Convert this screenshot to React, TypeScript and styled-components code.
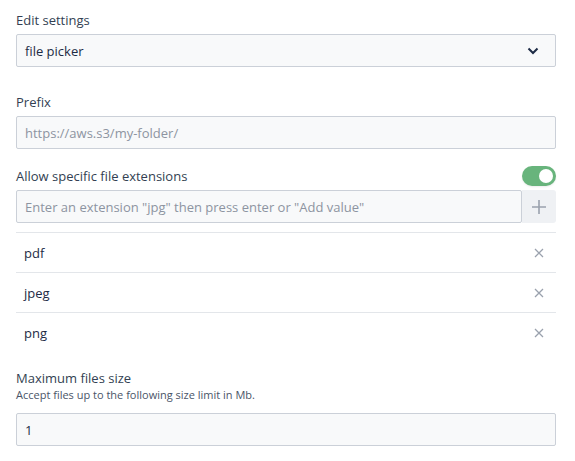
import React from 'react';
import styled, { createGlobalStyle } from 'styled-components';

const GlobalStyle = createGlobalStyle`
  body {
    margin: 0;
    background: #fff;
    font-family: "Open Sans", "Liberation Sans", sans-serif;
    color: #1d2b45;
  }
`;

const Page = styled.div`
  width: 540px;
  padding: 10px 19px 16px 16px;
  display: flex;
  flex-direction: column;
`;

const Field = styled.div<{ $gap?: number }>`
  display: flex;
  flex-direction: column;
  margin-bottom: ${(p) => p.$gap ?? 0}px;
`;

const LabelRow = styled.div<{ $height?: number; $space?: number }>`
  display: flex;
  align-items: center;
  justify-content: space-between;
  height: ${(p) => p.$height ?? 20}px;
  margin-bottom: ${(p) => p.$space ?? 4}px;
`;

const Label = styled.div`
  font-size: 13px;
  line-height: 18px;
  color: #333f52;
`;

const Help = styled.div`
  font-size: 11px;
  line-height: 15px;
  color: #4a5568;
  margin-bottom: 11px;
`;

const Box = styled.div<{ $muted?: boolean }>`
  height: 31px;
  flex-shrink: 0;
  box-sizing: content-box;
  border: 1px solid #cbd0d8;
  border-radius: 2px;
  background: #f8f9fa;
  display: flex;
  align-items: center;
  padding: 0 12px 0 8px;
  font-size: 13px;
  color: ${(p) => (p.$muted ? '#8d94a1' : '#1d2b45')};
`;

const GroupInput = styled(Box)`
  flex: 1;
`;

const Chevron = styled.svg`
  margin-left: auto;
  width: 12px;
  height: 8px;
  margin-right: 4px;
`;

const InputGroup = styled.div`
  display: flex;
  height: 33px;
`;

const AddButton = styled.div`
  width: 34px;
  background: #eff1f4;
  border-radius: 0 3px 3px 0;
  display: flex;
  align-items: center;
  justify-content: center;
`;

const List = styled.div`
  margin-top: 9px;
  display: flex;
  flex-direction: column;
`;

const Item = styled.div`
  height: 39px;
  border-top: 1px solid #e3e6ea;
  display: flex;
  align-items: center;
  padding: 0 12px 0 8px;
  font-size: 13px;
  color: #1d2b45;
`;

const Remove = styled.svg`
  margin-left: auto;
  width: 10px;
  height: 10px;
`;

const Toggle = styled.div<{ $on: boolean }>`
  width: 34px;
  height: 20px;
  border-radius: 10px;
  background: ${(p) => (p.$on ? '#68b47c' : '#cbd0d8')};
  display: flex;
  align-items: center;
  justify-content: ${(p) => (p.$on ? 'flex-end' : 'flex-start')};
  padding: 0 3px;
  box-sizing: border-box;
  box-shadow: 0 1px 2px rgba(0, 0, 0, 0.08);
`;

const Knob = styled.div`
  width: 14px;
  height: 14px;
  border-radius: 50%;
  background: #fff;
`;

const extensions = ['pdf', 'jpeg', 'png'];

export default function App() {
  return (
    <>
      <GlobalStyle />
      <Page>
        <Field $gap={25}>
          <LabelRow>
            <Label>Edit settings</Label>
          </LabelRow>
          <Box>
            file picker
            <Chevron viewBox="0 0 12 8">
              <path d="M1.5 1.5 L6 6 L10.5 1.5" fill="none" stroke="#1d2b45" strokeWidth="2" />
            </Chevron>
          </Box>
        </Field>

        <Field $gap={17}>
          <LabelRow>
            <Label>Prefix</Label>
          </LabelRow>
          <Box $muted>https://aws.s3/my-folder/</Box>
        </Field>

        <Field $gap={17}>
          <LabelRow>
            <Label>Allow specific file extensions</Label>
            <Toggle $on>
              <Knob />
            </Toggle>
          </LabelRow>
          <InputGroup>
            <GroupInput $muted>Enter an extension "jpg" then press enter or "Add value"</GroupInput>
            <AddButton>
              <svg width="16" height="16" viewBox="0 0 16 16">
                <path d="M8 1 V15 M1 8 H15" stroke="#9aa1ad" strokeWidth="1.6" />
              </svg>
            </AddButton>
          </InputGroup>
          <List>
            {extensions.map((ext) => (
              <Item key={ext}>
                {ext}
                <Remove viewBox="0 0 10 10">
                  <path d="M1 1 L9 9 M9 1 L1 9" stroke="#9aa1ad" strokeWidth="1.3" />
                </Remove>
              </Item>
            ))}
          </List>
        </Field>

        <Field>
          <LabelRow $height={18} $space={0}>
            <Label>Maximum files size</Label>
          </LabelRow>
          <Help>Accept files up to the following size limit in Mb.</Help>
          <Box>1</Box>
        </Field>
      </Page>
    </>
  );
}
